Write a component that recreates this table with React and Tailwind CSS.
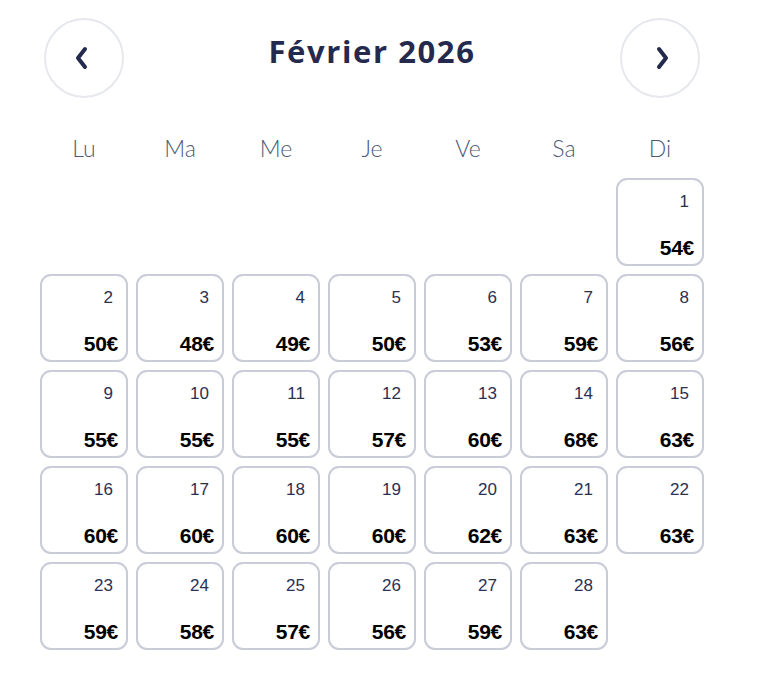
import React from "react";

const prices = {
  1: 54, 2: 50, 3: 48, 4: 49, 5: 50, 6: 53, 7: 59, 8: 56,
  9: 55, 10: 55, 11: 55, 12: 57, 13: 60, 14: 68, 15: 63,
  16: 60, 17: 60, 18: 60, 19: 60, 20: 62, 21: 63, 22: 63,
  23: 59, 24: 58, 25: 57, 26: 56, 27: 59, 28: 63,
};

const days = ["Lu", "Ma", "Me", "Je", "Ve", "Sa", "Di"];

function Chevron({ dir }) {
  return (
    <svg width="20" height="26" viewBox="0 0 20 26" fill="none">
      {dir === "left" ? (
        <path d="M14 4 L7 13 L14 22" stroke="#232a4d" strokeWidth="4" strokeLinecap="round" strokeLinejoin="round" />
      ) : (
        <path d="M6 4 L13 13 L6 22" stroke="#232a4d" strokeWidth="4" strokeLinecap="round" strokeLinejoin="round" />
      )}
    </svg>
  );
}

export default function App() {
  const cells = [];
  for (let i = 0; i < 6; i++) cells.push(null);
  for (let d = 1; d <= 28; d++) cells.push(d);

  return (
    <div className="w-[758px] h-[696px] bg-white pl-[40px] pt-[18px]" style={{ fontFamily: "Lato, sans-serif" }}>
      <div className="w-[664px]">
        <div className="flex items-center justify-between pl-[4px] pr-[4px]">
          <button className="w-[80px] h-[80px] rounded-full border-2 border-[#e6e8ee] flex items-center justify-center">
            <span className="-ml-[7px]"><Chevron dir="left" /></span>
          </button>
          <div
            className="text-[31px] font-bold text-[#232a4d] -mt-[14px] tracking-[1.6px]"
            style={{ fontFamily: "'Open Sans', sans-serif" }}
          >
            Février 2026
          </div>
          <button className="w-[80px] h-[80px] rounded-full border-2 border-[#e6e8ee] flex items-center justify-center">
            <span className="ml-[7px]"><Chevron dir="right" /></span>
          </button>
        </div>
        <div className="grid grid-cols-7 gap-x-[8px] mt-[36px]">
          {days.map((d) => (
            <div key={d} className="text-center text-[23px] text-[#4d5a76] leading-[28px] font-light">{d}</div>
          ))}
        </div>
        <div className="grid grid-cols-7 gap-[8px] mt-[16px]" style={{ fontFamily: "'Liberation Sans', Arial, sans-serif" }}>
          {cells.map((d, i) =>
            d === null ? (
              <div key={i} className="h-[88px]" />
            ) : (
              <div key={i} className="h-[88px] rounded-[11px] border-2 border-[#c9ccd8] flex flex-col items-end justify-between pt-[12px] pb-[4px]">
                <div className="text-[17px] text-[#2a3052] pr-[13px] leading-[20px]">{d}</div>
                <div className="text-[21px] font-bold text-black pr-[8px] leading-[24px] tracking-[-0.3px]">{prices[d]}€</div>
              </div>
            )
          )}
        </div>
      </div>
    </div>
  );
}
